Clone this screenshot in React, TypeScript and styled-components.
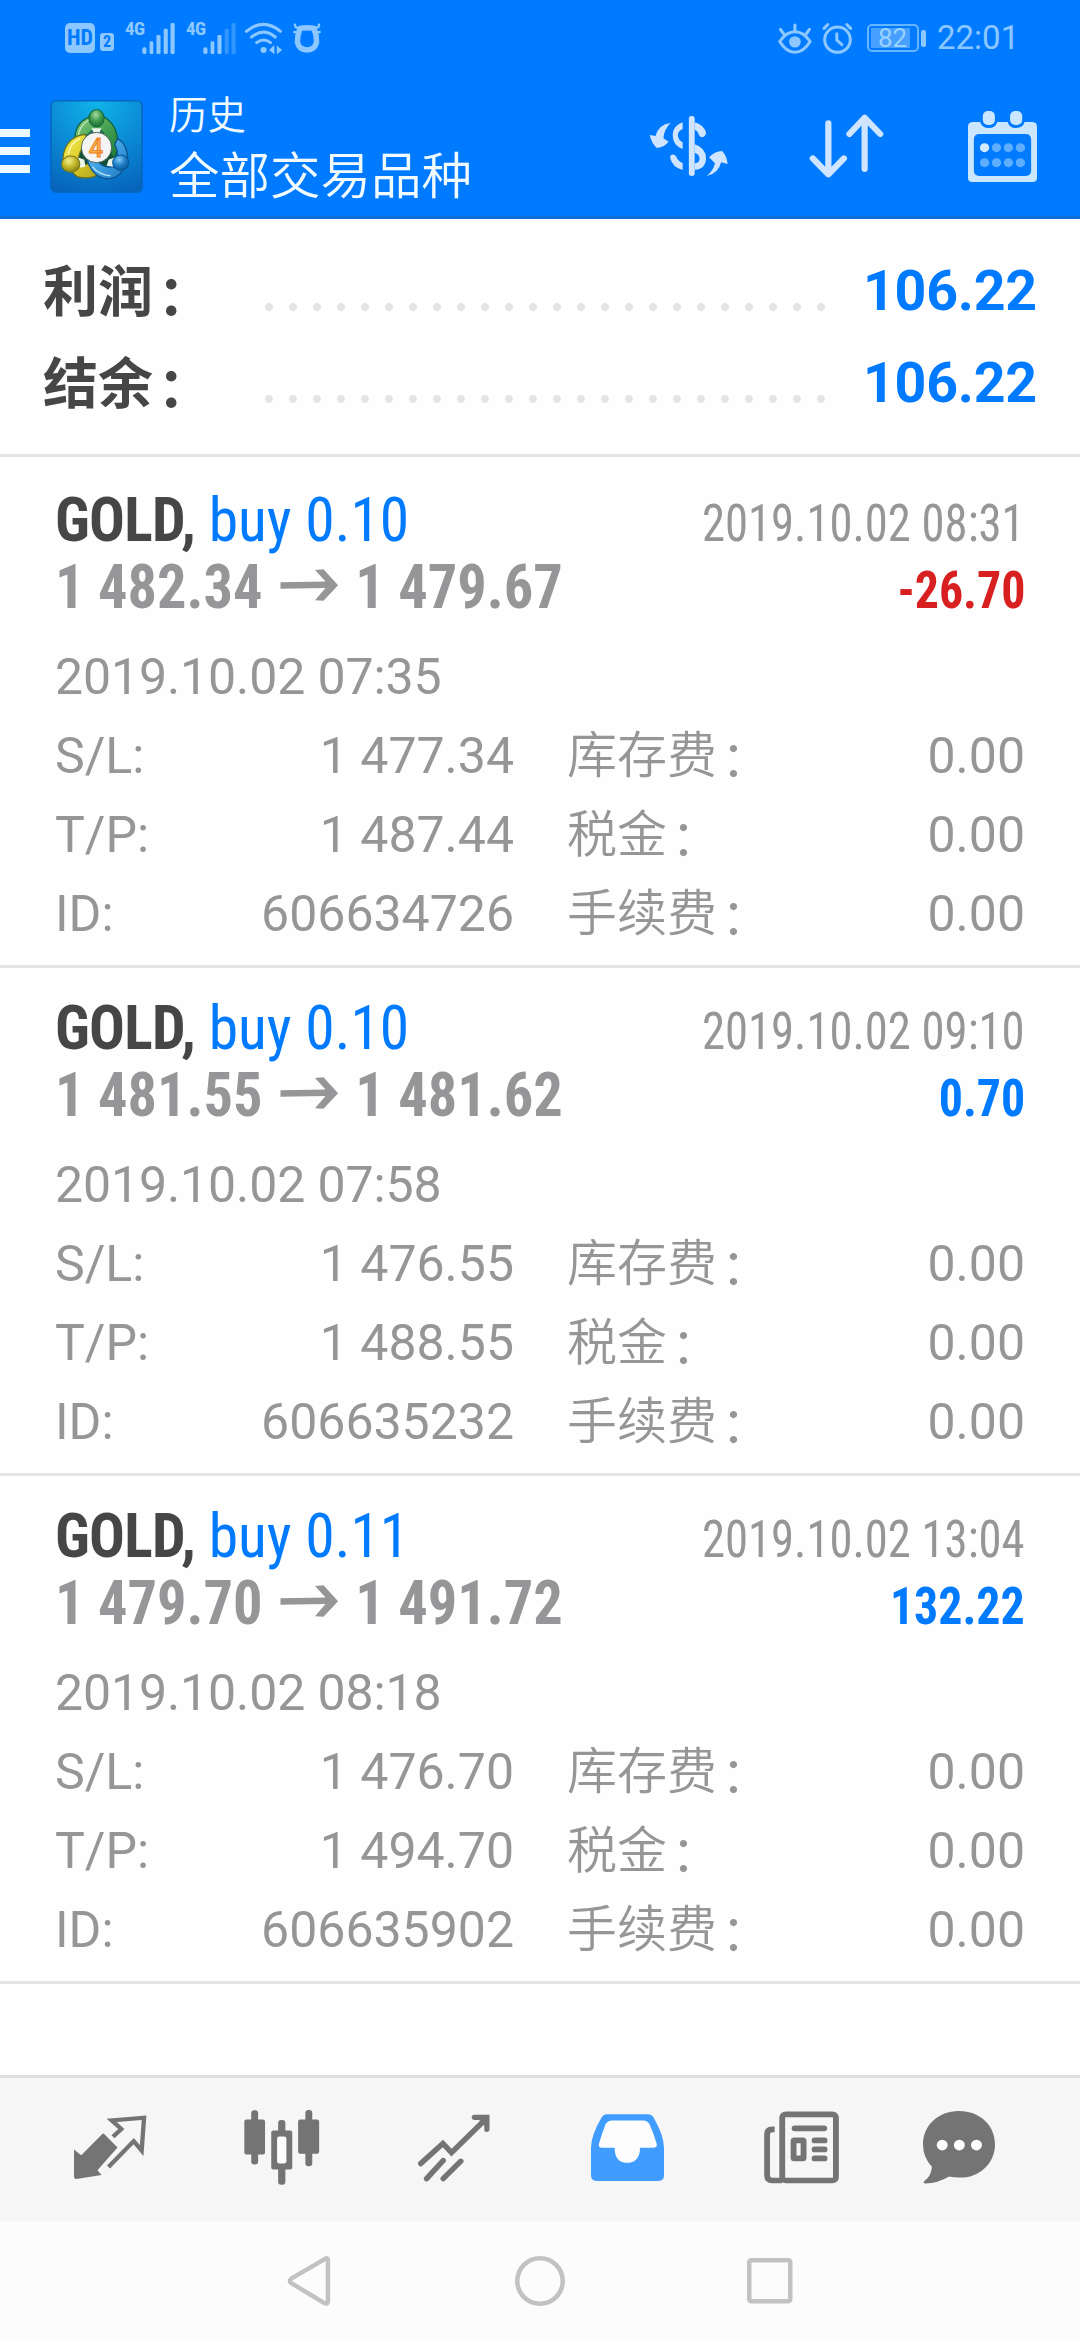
import React from "react";
import styled, { createGlobalStyle } from "styled-components";

const GlobalStyle = createGlobalStyle`
  * { box-sizing: border-box; }
  body { margin: 0; background: #fff; }
`;

const sans = `Roboto, "Noto Sans CJK SC", sans-serif`;
const condensed = `"Roboto Condensed", Roboto, "Noto Sans CJK SC", sans-serif`;

const Screen = styled.div`
  width: 1080px;
  height: 2340px;
  display: flex;
  flex-direction: column;
  background: #fefefe;
  font-family: ${sans};
  overflow: hidden;
`;

const Glyph = styled.svg<{ $w: number; $h: number; $ml?: number }>`
  display: block;
  flex: none;
  width: ${(p) => p.$w}px;
  height: ${(p) => p.$h}px;
  margin-left: ${(p) => p.$ml ?? 0}px;
  overflow: visible;
`;

/* ---------- header ---------- */

const Header = styled.header`
  height: 219px;
  background: #007aff;
  border-bottom: 3px solid #126dd6;
  flex: none;
`;

const StatusBar = styled.div`
  height: 76px;
  display: flex;
  align-items: center;
  padding: 0 63px 0 65px;
  color: #8cc8ff;
`;

const HdBadge = styled.span`
  width: 30px;
  height: 30px;
  border-radius: 5px;
  background: #8cc8ff;
  color: #007aff;
  font: 700 22px/30px ${condensed};
  font-stretch: 75%;
  text-align: center;
`;

const SimBadge = styled.span`
  width: 14px;
  height: 18px;
  margin: 7px 0 0 5px;
  border-radius: 3px;
  background: #8cc8ff;
  color: #007aff;
  font: 700 16px/18px ${condensed};
  text-align: center;
`;

const NetLabel = styled.span<{ $ml: number }>`
  width: 17px;
  margin: -18px 0 0 ${(p) => p.$ml}px;
  font: 700 19px/20px ${condensed};
  font-stretch: 75%;
  letter-spacing: -0.5px;
`;

const Spacer = styled.span`
  flex: 1;
`;

const Battery = styled.span`
  display: flex;
  align-items: center;
  margin-left: 14px;
`;

const BatteryBody = styled.span`
  width: 52px;
  height: 28px;
  padding: 2px;
  border: 2px solid #66b5ff;
  border-radius: 5px;
`;

const BatteryFill = styled.span`
  display: block;
  width: 39px;
  height: 20px;
  background: #479fff;
  color: #9ad2ff;
  font: 400 26px/20px ${sans};
  padding-left: 7px;
`;

const BatteryTip = styled.span`
  width: 5px;
  height: 17px;
  margin-left: 2px;
  border-radius: 2px;
  background: #8cc8ff;
`;

const Clock = styled.span`
  width: 80px;
  margin-left: 11px;
  font-size: 33px;
  line-height: 40px;
`;

const Toolbar = styled.div`
  height: 140px;
  display: flex;
  align-items: center;
`;

const Menu = styled.button`
  display: flex;
  flex-direction: column;
  gap: 10px;
  width: 30px;
  margin: 9px 20px 0 0;
  padding: 0;
  border: 0;
  background: none;
`;

const MenuLine = styled.i`
  height: 8px;
  background: #ecf9ff;
`;

const Heading = styled.div`
  margin: 7px 0 0 26px;
  width: 480px;
  color: #f0faff;
`;

const Section = styled.div`
  font-size: 38.5px;
  line-height: 50px;
  font-weight: 350;
`;

const Scope = styled.h1`
  margin: 5px 0 0;
  font-size: 50.5px;
  line-height: 62px;
  font-weight: 350;
`;

/* ---------- summary ---------- */

const Summary = styled.section`
  height: 238px;
  flex: none;
  padding: 27px 43px 0;
  border-bottom: 3px solid #e4e4e4;
`;

const SummaryRow = styled.div`
  height: 92px;
  display: flex;
  align-items: center;
  font-weight: 700;
  line-height: 92px;
`;

const SummaryLabel = styled.span`
  width: 222px;
  font-size: 55px;
  color: #464646;
`;

const Colon = styled.span`
  margin-left: 0.08em;
  line-height: 0;
  vertical-align: -0.07em;
`;

const Leader = styled.span`
  width: 576px;
  height: 8px;
  margin-top: 30px;
  background: radial-gradient(circle at 4px 4px, #e4e4e4 3.6px, transparent 4.3px) 0 0 / 24px 8px repeat-x;
`;

const SummaryValue = styled.span`
  flex: 1;
  text-align: right;
  font-size: 55.5px;
  letter-spacing: -0.2px;
  color: #007aff;
`;

/* ---------- deals ---------- */

const List = styled.main`
  flex: 1;
  padding-top: 3px;
`;

const Card = styled.article`
  height: 508px;
  padding: 26px 55px 0;
  border-bottom: 3px solid #e4e4e4;
  color: #969698;
`;

const CardLine = styled.div`
  height: 67px;
  display: flex;
  align-items: baseline;
  justify-content: space-between;
  line-height: 67px;
  font-family: ${condensed};
  font-stretch: 75%;
  white-space: nowrap;
`;

/* The condensed face is drawn slightly narrower than the installed cut. */
const Narrow = styled.span<{ $scale: number; $from?: "left" | "right" }>`
  transform: scaleX(${(p) => p.$scale});
  transform-origin: ${(p) => p.$from ?? "left"} center;
`;

const Title = styled(Narrow)`
  font-size: 62px;
  color: #007aff;
`;

const Symbol = styled.b`
  color: #464646;
  letter-spacing: -0.8px;
`;

const Prices = styled(Narrow)`
  display: flex;
  align-items: baseline;
  gap: 18.5px;
  font-size: 62px;
  font-weight: 700;
`;

const CloseTime = styled(Narrow)`
  font-size: 51px;
`;

const Profit = styled(Narrow)<{ $loss: boolean }>`
  font-size: 51px;
  font-weight: 700;
  color: ${(p) => (p.$loss ? "#d92020" : "#007aff")};
`;

const OpenTime = styled.div`
  margin-top: 18px;
  height: 79px;
  font-size: 50px;
  line-height: 79px;
  letter-spacing: -0.1px;
`;

const Details = styled.div`
  display: grid;
  grid-template-columns: 160px 299px 53px 1fr auto;
  grid-auto-rows: 79px;
  font-size: 50px;
  line-height: 79px;
`;

const Amount = styled.span`
  text-align: right;
`;

const FeeLabel = styled.span`
  grid-column: 4;
  font-weight: 350;
`;

/* ---------- bottom ---------- */

const TabBar = styled.nav`
  height: 147px;
  flex: none;
  display: flex;
  align-items: center;
  padding-bottom: 6px;
  border-top: 3px solid #e0e0e0;
  background: #f6f6f6;
  color: #747474;
`;

const SystemNav = styled.footer`
  height: 118px;
  flex: none;
  display: flex;
  align-items: center;
  background: #fcfcfc;
  color: #c2c2c2;
`;

const Signal = ({ dim }: { dim?: boolean }) => (
  <Glyph $w={33} $h={31} viewBox="414 65 96 93" preserveAspectRatio="none" fill="currentColor">
    <rect x="415" y="138" width="12" height="20" rx="5" />
    <rect x="436" y="120" width="11" height="38" rx="4" />
    <rect x="456" y="101" width="12" height="57" rx="4" />
    <rect x="477" y="82" width="12" height="76" rx="4" opacity={dim ? 0.35 : 1} />
    <rect x="497" y="65" width="12" height="93" rx="4" opacity={dim ? 0.35 : 1} />
  </Glyph>
);

const Wifi = () => (
  <Glyph $w={37.5} $h={31} $ml={9} viewBox="712 65 109 93" preserveAspectRatio="none" fill="none" stroke="currentColor" strokeWidth="9" strokeLinecap="round">
    <path d="M716 90Q766 48 815 90M731 107Q766 78 800 107M746 124Q766 108 786 124" />
    <circle cx="766" cy="146" r="9" fill="currentColor" stroke="none" />
    <path d="M782 146L796 132V158ZM820 146L806 134V158Z" fill="currentColor" stroke="none" />
    <path d="M796 134V156M806 134V156" strokeWidth="3" />
  </Glyph>
);

const Bull = () => (
  <Glyph $w={28} $h={30} $ml={10} viewBox="850 70 82 88" preserveAspectRatio="none" fill="none" stroke="currentColor">
    <path d="M870 88Q866 84 891 84Q916 84 912 88Q920 108 919 126Q914 149 891 149Q868 149 863 126Q862 108 870 88Z" strokeWidth="16" />
    <path d="M856 72Q854 86 868 84M926 72Q928 86 914 84M851 96L864 98M931 96L918 98" strokeWidth="7" />
  </Glyph>
);

const Eye = () => (
  <Glyph $w={33.5} $h={31} viewBox="690 65 97 92" preserveAspectRatio="none" fill="none" stroke="currentColor" strokeWidth="9" strokeLinecap="round">
    <path d="M695 120Q714 91 739 91Q764 91 783 120Q764 152 739 152Q714 152 695 120Z" />
    <circle cx="739" cy="121" r="17" fill="currentColor" stroke="none" />
    <path d="M739 71V88M697 84L707 98M781 84L771 98" />
  </Glyph>
);

const Alarm = () => (
  <Glyph $w={31} $h={31} $ml={11} viewBox="820 65 92 93" preserveAspectRatio="none" fill="none" stroke="currentColor" strokeWidth="9" strokeLinecap="round">
    <circle cx="866" cy="115" r="38" />
    <path d="M864 97V116L879 130M826 81L837 70M905 81L894 70" />
  </Glyph>
);

const Logo = () => (
  <Glyph $w={93} $h={93} viewBox="0 0 92 92">
    <defs>
      <radialGradient id="tile" cx=".5" cy="0" r="1.100">
        <stop offset="0" stopColor="#10b4ea" />
        <stop offset=".55" stopColor="#0a86d2" />
        <stop offset="1" stopColor="#0661b8" />
      </radialGradient>
      <linearGradient id="green" x1="0" y1="0" x2="1" y2="1">
        <stop offset="0" stopColor="#8fd08a" />
        <stop offset=".4" stopColor="#4fa958" />
        <stop offset="1" stopColor="#1c7a3a" />
      </linearGradient>
      <linearGradient id="gold" x1="0" y1="0" x2="1" y2="1">
        <stop offset="0" stopColor="#f6ef5c" />
        <stop offset=".5" stopColor="#dccb28" />
        <stop offset="1" stopColor="#a99f1e" />
      </linearGradient>
      <linearGradient id="azure" x1="0" y1="0" x2="1" y2="1">
        <stop offset="0" stopColor="#6fc3f2" />
        <stop offset=".5" stopColor="#3d9fe0" />
        <stop offset="1" stopColor="#1c74bf" />
      </linearGradient>
      <radialGradient id="greenHead" cx=".45" cy=".3" r=".75">
        <stop offset="0" stopColor="#a8dba0" />
        <stop offset=".5" stopColor="#3f9a4d" />
        <stop offset="1" stopColor="#136b35" />
      </radialGradient>
      <radialGradient id="goldHead" cx=".4" cy=".3" r=".75">
        <stop offset="0" stopColor="#f3f08a" />
        <stop offset=".5" stopColor="#c4b92a" />
        <stop offset="1" stopColor="#7f7c16" />
      </radialGradient>
      <radialGradient id="azureHead" cx=".4" cy=".3" r=".75">
        <stop offset="0" stopColor="#7fcaf4" />
        <stop offset=".5" stopColor="#2181c8" />
        <stop offset="1" stopColor="#0a4f92" />
      </radialGradient>
    </defs>
    <rect x=".8" y=".8" width="90.400" height="90.400" rx="5" fill="url(#tile)" stroke="#0566c4" strokeWidth="1.600" />
    <path d="M46 27L62 44L66 62L46 70L26 64L30 44Z" fill="#14513a" />
    <path d="M25 42Q23 24 38 17L54 17Q69 26 67 50L63 58L57 46Q56 34 49 29L43 29Q38 34 32 38Z" fill="url(#green)" stroke="#125c34" strokeWidth="1.200" />
    <path d="M28 38Q28 26 38 20" fill="none" stroke="#c4ebb9" strokeWidth="1.200" />
    <path d="M35 34Q21 35 15 48Q12 56 13 62L27 64Q28 50 37 40ZM22 70Q24 78 38 77Q46 76 51 71L38 63L28 66Z" fill="url(#gold)" stroke="#6a701c" strokeWidth="1.200" />
    <path d="M67 38Q77 44 77 60L66 60Q68 50 64 44ZM37 60Q42 76 56 78Q68 78 72 69L62 66Q54 68 46 60Z" fill="url(#azure)" stroke="#0a4f8e" strokeWidth="1.200" />
    <path d="M18 54Q20 42 30 38" fill="none" stroke="#fdfbb0" strokeWidth="1.300" />
    <path d="M42 66Q48 74 60 75" fill="none" stroke="#b5e2fb" strokeWidth="1.300" />
    <path d="M41 28L51 28L48 34L44 34ZM28 57L34 59L35 66L29 67ZM58 59L64 57L63 66L56 65Z" fill="#eef6ea" />
    <ellipse cx="46" cy="18" rx="7.500" ry="8.500" fill="url(#greenHead)" stroke="#14683a" />
    <ellipse cx="20.500" cy="63.500" rx="9" ry="8" fill="url(#goldHead)" stroke="#7a7a1c" />
    <ellipse cx="70" cy="62" rx="8" ry="7.500" fill="url(#azureHead)" stroke="#0b5a9c" />
    <circle cx="46" cy="47" r="15" fill="#f4f4f4" stroke="#274a3a" strokeWidth=".8" />
    <text x="45.500" y="56" textAnchor="middle" fontFamily="Roboto, sans-serif" fontWeight="500" fontSize="25" fill="#fbb04a" stroke="#ec7c22" strokeWidth=".8">4</text>
  </Glyph>
);

const MoneyIcon = () => (
  <Glyph $w={79} $h={60} viewBox="320 345 230 180" preserveAspectRatio="none" fill="#cfe5ff">
    <rect x="436" y="345" width="17" height="180" rx="8" />
    <path d="M418 364V384Q404 390 404 403Q404 417 418 424V444Q389 434 389 403Q389 374 418 364Z" />
    <path d="M384 462Q394 458 400 468Q404 480 418 486V507Q388 499 382 472Q381 465 384 462Z" />
    <path d="M453 364Q478 371 486 394Q486 408 474 409Q467 408 465 401Q462 389 453 386Z" />
    <path d="M453 430Q486 440 486 473Q486 503 453 507V487Q467 485 467 473Q467 460 453 455Z" />
    <path d="M383 366Q364 384 362 412L377 422Q366 438 343 441Q328 428 322 402L339 405Q348 370 383 366Z" />
    <path d="M488 525Q508 508 512 487L495 469Q510 451 533 450Q547 466 549 489L530 484Q522 518 488 525Z" />
  </Glyph>
);

const SortIcon = () => (
  <Glyph $w={75} $h={64} $ml={80.5} viewBox="780 343 217 192" preserveAspectRatio="none" fill="none" stroke="#cfe5ff" strokeWidth="18" strokeLinecap="round" strokeLinejoin="round">
    <path d="M836 371V524M791 476L836 524L881 476M941 508V354M897 403L941 354L986 403" />
  </Glyph>
);

const CalendarIcon = () => (
  <Glyph $w={69} $h={71} $ml={84.5} viewBox="1243 330 200 213" preserveAspectRatio="none">
    <path fillRule="evenodd" fill="#cbe6ff" d="M1256 363H1278Q1284 381 1303 381Q1323 381 1328 363H1358Q1363 381 1382 381Q1402 381 1407 363H1430Q1443 364 1443 377V530Q1443 543 1430 543H1256Q1243 543 1243 530V377Q1243 364 1256 363ZM1276 399Q1260 399 1260 416V508Q1260 525 1276 525H1410Q1426 525 1426 508V416Q1426 399 1410 399Z" />
    <rect x="1286" y="330" width="35" height="42" rx="15" fill="#cbe6ff" />
    <rect x="1365" y="330" width="35" height="42" rx="15" fill="#cbe6ff" />
    {[0, 1, 2, 3].map((i) => (
      <g key={i} fill="#5eaeff">
        <circle cx={1291 + i * 34.6} cy="440" r="13.500" fill={i === 0 ? "#d2eaff" : "#5eaeff"} />
        <circle cx={1291 + i * 34.6} cy="485" r="13.500" />
      </g>
    ))}
  </Glyph>
);

const Arrow = () => (
  <Glyph $w={61.5} $h={32} viewBox="812 1020 171 94" preserveAspectRatio="none" fill="currentColor" role="img" aria-label="to">
    <path d="M813 1059L946 1057L915 1023L940 1021L983 1068L940 1113L915 1112L946 1076L813 1078Z" />
  </Glyph>
);

/* Lifts the arrow off the text baseline to the middle of the digits. */
const ArrowSlot = styled.span`
  padding-bottom: 7px;
`;

type Deal = {
  lots: string;
  open: string;
  close: string;
  closeTime: string;
  profit: string;
  openTime: string;
  sl: string;
  tp: string;
  id: string;
};

const deals: Deal[] = [
  { lots: "0.10", open: "1 482.34", close: "1 479.67", closeTime: "2019.10.02 08:31", profit: "-26.70", openTime: "2019.10.02 07:35", sl: "1 477.34", tp: "1 487.44", id: "606634726" },
  { lots: "0.10", open: "1 481.55", close: "1 481.62", closeTime: "2019.10.02 09:10", profit: "0.70", openTime: "2019.10.02 07:58", sl: "1 476.55", tp: "1 488.55", id: "606635232" },
  { lots: "0.11", open: "1 479.70", close: "1 491.72", closeTime: "2019.10.02 13:04", profit: "132.22", openTime: "2019.10.02 08:18", sl: "1 476.70", tp: "1 494.70", id: "606635902" },
];

const DealCard = ({ deal }: { deal: Deal }) => (
  <Card>
    <CardLine>
      <Title $scale={0.96}>
        <Symbol>GOLD,</Symbol> buy {deal.lots}
      </Title>
      <CloseTime $scale={0.915} $from="right">
        {deal.closeTime}
      </CloseTime>
    </CardLine>
    <CardLine>
      <Prices $scale={0.942}>
        {deal.open}
        <ArrowSlot>
          <Arrow />
        </ArrowSlot>
        {deal.close}
      </Prices>
      <Profit $scale={0.938} $from="right" $loss={deal.profit.startsWith("-")}>
        {deal.profit}
      </Profit>
    </CardLine>
    <OpenTime>{deal.openTime}</OpenTime>
    <Details>
      <span>S/L:</span>
      <Amount>{deal.sl}</Amount>
      <FeeLabel>
        库存费<Colon>：</Colon>
      </FeeLabel>
      <Amount>0.00</Amount>
      <span>T/P:</span>
      <Amount>{deal.tp}</Amount>
      <FeeLabel>
        税金<Colon>：</Colon>
      </FeeLabel>
      <Amount>0.00</Amount>
      <span>ID:</span>
      <Amount>{deal.id}</Amount>
      <FeeLabel>
        手续费<Colon>：</Colon>
      </FeeLabel>
      <Amount>0.00</Amount>
    </Details>
  </Card>
);

export default function App() {
  return (
    <Screen>
      <GlobalStyle />
      <Header>
        <StatusBar>
          <HdBadge>HD</HdBadge>
          <SimBadge>2</SimBadge>
          <NetLabel $ml={11}>4G</NetLabel>
          <Signal />
          <NetLabel $ml={11}>4G</NetLabel>
          <Signal dim />
          <Wifi />
          <Bull />
          <Spacer />
          <Eye />
          <Alarm />
          <Battery>
            <BatteryBody>
              <BatteryFill>82</BatteryFill>
            </BatteryBody>
            <BatteryTip />
          </Battery>
          <Clock>22:01</Clock>
        </StatusBar>
        <Toolbar>
          <Menu aria-label="menu">
            <MenuLine />
            <MenuLine />
            <MenuLine />
          </Menu>
          <Logo />
          <Heading>
            <Section>历史</Section>
            <Scope>全部交易品种</Scope>
          </Heading>
          <MoneyIcon />
          <SortIcon />
          <CalendarIcon />
        </Toolbar>
      </Header>

      <Summary>
        <SummaryRow>
          <SummaryLabel>
            利润<Colon>：</Colon>
          </SummaryLabel>
          <Leader />
          <SummaryValue>106.22</SummaryValue>
        </SummaryRow>
        <SummaryRow>
          <SummaryLabel>
            结余<Colon>：</Colon>
          </SummaryLabel>
          <Leader />
          <SummaryValue>106.22</SummaryValue>
        </SummaryRow>
      </Summary>

      <List>
        {deals.map((deal) => (
          <DealCard key={deal.id} deal={deal} />
        ))}
      </List>

      <TabBar>
        <Glyph $w={72.5} $h={64} $ml={74} viewBox="215 169 210 191" preserveAspectRatio="none" fill="currentColor">
          <path d="M301 224L341 266L283 334L295 348L222 360Q215 360 215 353V272L236 289L297 226Z" />
          <path d="M328 234L352 211L324 185L418 177L411 275L388 247L315 324" fill="none" stroke="currentColor" strokeWidth="12.500" />
        </Glyph>
        <Glyph $w={75.5} $h={75} $ml={97} viewBox="708 152 219 224" preserveAspectRatio="none" fill="currentColor">
          <rect x="729" y="153" width="20" height="162" rx="9" />
          <rect x="709" y="180" width="60" height="105" rx="6" />
          <rect x="886" y="152" width="20" height="168" rx="9" />
          <rect x="865" y="180" width="61" height="103" rx="6" />
          <rect x="807" y="182" width="21" height="193" rx="9" />
          <rect x="787" y="213" width="61" height="117" rx="6" />
          <rect x="804" y="231" width="27" height="81" rx="7" fill="#fdfdfd" />
        </Glyph>
        <Glyph $w={71.5} $h={67} $ml={99} viewBox="1213 160 207 200" preserveAspectRatio="none" fill="none" stroke="currentColor" strokeWidth="16" strokeLinecap="round">
          <path d="M1221 308L1285 248L1310 275L1406 178M1238 353L1286 299M1286 353L1337 301" />
          <path d="M1375 162H1420V208Q1418 214 1411 214Q1405 214 1405 208V195L1390 178H1375Q1368 177 1368 170Q1369 163 1375 162Z" fill="currentColor" stroke="none" />
        </Glyph>
        <Glyph $w={73} $h={67} $ml={101} viewBox="145 161 212 199" preserveAspectRatio="none">
          <path fill="#fdfdfd" d="M190 172H312L345 264H160Z" />
          <path fill="#fdfdfd" d="M200 255H300V312H200Z" />
          <path fillRule="evenodd" fill="#409cff" d="M190 162H312Q321 162 326 170Q357 225 357 262V344Q357 360 341 360H161Q145 360 145 344V262Q145 225 176 171Q181 162 190 162ZM204 180Q193 181 188 190Q176 220 168 250Q166 261 176 261H214V270Q218 306 250 306Q282 306 287 270V261H328Q338 260 336 250Q326 215 314 189Q309 181 299 180Z" />
        </Glyph>
        <Glyph $w={75} $h={72.5} $ml={100} viewBox="646 152 218 217" preserveAspectRatio="none" fill="none" stroke="currentColor" strokeWidth="17">
          <rect x="699" y="162" width="156" height="198" rx="10" />
          <path d="M677 207H670Q655 207 655 222V345Q655 360 670 360H699" />
          <path d="M735 204H821" strokeLinecap="round" />
          <path d="M793 240H822M793 267H822M793 294H822" strokeLinecap="round" />
          <rect x="732" y="240" width="29" height="54" rx="2" />
        </Glyph>
        <Glyph $w={72} $h={72.5} $ml={84} viewBox="1108 152 210 217" preserveAspectRatio="none" fill="currentColor">
          <path d="M1213 152C1275 152 1318 196 1318 252C1318 310 1270 354 1213 351Q1196 351 1184 348Q1152 368 1114 369Q1106 367 1113 361Q1132 347 1134 319Q1108 290 1108 252C1108 196 1152 152 1213 152Z" />
          <circle cx="1164" cy="254" r="16" fill="#fff" />
          <circle cx="1214" cy="254" r="16" fill="#fff" />
          <circle cx="1264" cy="254" r="16" fill="#fff" />
        </Glyph>
      </TabBar>

      <SystemNav>
        <Glyph $w={43} $h={50} $ml={287} viewBox="833 588 125 150" preserveAspectRatio="none" fill="none" stroke="currentColor" strokeWidth="13" strokeLinejoin="round">
          <path d="M945 596Q952 592 952 603V723Q952 734 943 730L845 669Q838 663 845 656Z" />
        </Glyph>
        <Glyph $w={50} $h={50} $ml={185} viewBox="0 0 50 50" fill="none" stroke="currentColor" strokeWidth="4.500">
          <circle cx="25" cy="25" r="22.700" />
        </Glyph>
        <Glyph $w={45.5} $h={45.5} $ml={181.5} viewBox="0 0 45.500 45.500" fill="none" stroke="currentColor" strokeWidth="4.500">
          <rect x="2.250" y="2.250" width="41" height="41" rx="2" />
        </Glyph>
      </SystemNav>
    </Screen>
  );
}
